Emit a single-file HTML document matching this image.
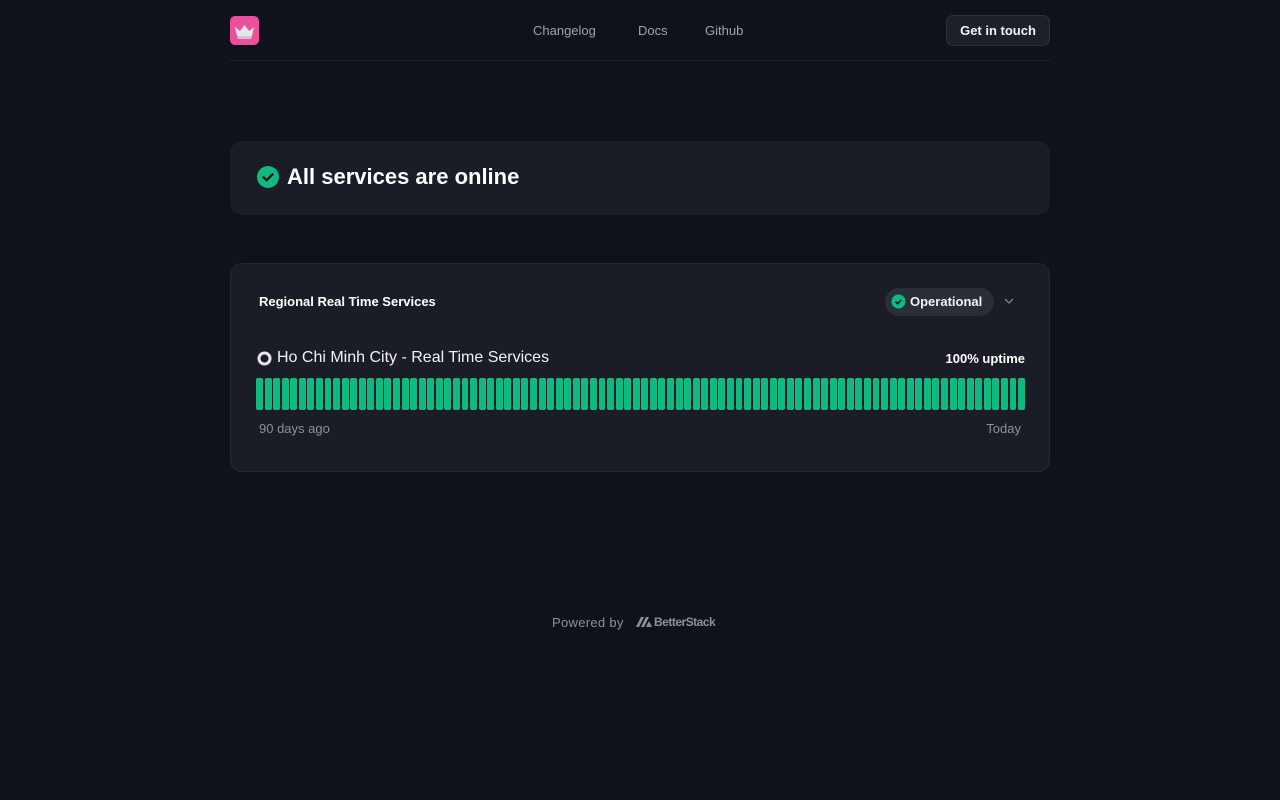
<!DOCTYPE html>
<html><head><meta charset="utf-8"><style>
*{box-sizing:border-box;margin:0;padding:0}
body{width:1280px;height:800px;background:#0f121a;font-family:"Liberation Sans",sans-serif;color:#fff;position:relative;overflow:hidden}
.hdr{position:absolute;left:230px;top:0;width:820px;height:61px;border-bottom:1px solid #1f232d}
.logo{position:absolute;left:0;top:16px;width:29px;height:29px;border-radius:5px;background:#ec4f9c}
.nav{position:absolute;top:23px;font-size:13px;color:#9ca3af}
.btn{position:absolute;right:0;top:15px;width:104px;height:31px;border:1px solid #2c313c;background:#1d2029;border-radius:7px;font-size:13px;font-weight:bold;color:#f1f2f4;text-align:center;line-height:29px}
.card1{position:absolute;left:230px;top:141px;width:820px;height:74px;background:#1a1d26;border-radius:12px}
.card2{position:absolute;left:230px;top:263px;width:820px;height:209px;background:#1a1d26;border:1px solid #242833;border-radius:12px}
.bars{position:absolute;left:25px;top:114px;width:769px;height:32px;display:flex;gap:1.6px}
.bars div{flex:1;background:#10b981;border-radius:2px}
</style></head><body>
<div class="hdr">
<div class="logo"><svg width="29" height="29" viewBox="0 0 29 29"><path d="M5 11l5 4 4.5-6 4.5 6 5-4-2 9H7z" fill="#e5e5ea"/><path d="M7 20h15l-1 3H8z" fill="#c8c8d0"/></svg></div>
<div class="nav" style="left:303px">Changelog</div>
<div class="nav" style="left:408px">Docs</div>
<div class="nav" style="left:475px">Github</div>
<div class="btn">Get in touch</div>
</div>
<div class="card1">
<svg style="position:absolute;left:27px;top:25px" width="22" height="22" viewBox="0 0 22 22"><circle cx="11" cy="11" r="11" fill="#10b981"/><path d="M6.5 11.3l3 3 6-6" stroke="#0f121a" stroke-width="2.4" fill="none" stroke-linecap="round" stroke-linejoin="round"/></svg>
<div style="position:absolute;left:57px;top:23px;font-size:22px;font-weight:bold">All services are online</div>
</div>
<div class="card2">
<div style="position:absolute;left:28px;top:30px;font-size:13px;font-weight:bold">Regional Real Time Services</div>
<div style="position:absolute;left:654px;top:24px;width:109px;height:28px;border-radius:14px;background:#2a2e39"></div>
<svg style="position:absolute;left:660px;top:30px" width="15" height="15" viewBox="0 0 15 15"><circle cx="7.5" cy="7.5" r="7" fill="#10b981"/><path d="M4.5 7.7l2 2 4-4" stroke="#1a1d26" stroke-width="1.6" fill="none"/></svg>
<div style="position:absolute;left:679px;top:30px;font-size:13px;font-weight:bold;color:#f1f2f4">Operational</div>
<svg style="position:absolute;left:773px;top:33px" width="10" height="8" viewBox="0 0 10 8"><path d="M1 2l4 4 4-4" stroke="#7c818c" stroke-width="1.3" fill="none"/></svg>
<svg style="position:absolute;left:26px;top:87px" width="15" height="15" viewBox="0 0 15 15"><circle cx="7.5" cy="7.5" r="5.5" fill="none" stroke="#e5e7eb" stroke-width="3"/></svg>
<div style="position:absolute;left:46px;top:85px;font-size:16px;color:#f1f2f4">Ho Chi Minh City - Real Time Services</div>
<div style="position:absolute;right:24px;top:87px;font-size:13px;font-weight:bold">100% uptime</div>
<div class="bars">
<div></div><div></div><div></div><div></div><div></div><div></div><div></div><div></div><div></div><div></div><div></div><div></div><div></div><div></div><div></div><div></div><div></div><div></div><div></div><div></div><div></div><div></div><div></div><div></div><div></div><div></div><div></div><div></div><div></div><div></div><div></div><div></div><div></div><div></div><div></div><div></div><div></div><div></div><div></div><div></div><div></div><div></div><div></div><div></div><div></div><div></div><div></div><div></div><div></div><div></div><div></div><div></div><div></div><div></div><div></div><div></div><div></div><div></div><div></div><div></div><div></div><div></div><div></div><div></div><div></div><div></div><div></div><div></div><div></div><div></div><div></div><div></div><div></div><div></div><div></div><div></div><div></div><div></div><div></div><div></div><div></div><div></div><div></div><div></div><div></div><div></div><div></div><div></div><div></div><div></div>
</div>
<div style="position:absolute;left:28px;top:157px;font-size:13px;color:#8b909a">90 days ago</div>
<div style="position:absolute;right:28px;top:157px;font-size:13px;color:#8b909a">Today</div>
</div>
<div style="position:absolute;left:552px;top:615px;font-size:13px;color:#8b909a;letter-spacing:0.3px">Powered by</div>
<svg style="position:absolute;left:636px;top:616px" width="16" height="12" viewBox="0 0 16 12"><path d="M0 11L5 1h3L3 11zM5 11l5-10h3L8 11zM10 11l3-6 3 6z" fill="#8b909a"/></svg>
<div style="position:absolute;left:654px;top:615px;font-size:12px;font-weight:bold;color:#8b909a;letter-spacing:-0.5px">BetterStack</div>
</body></html>
